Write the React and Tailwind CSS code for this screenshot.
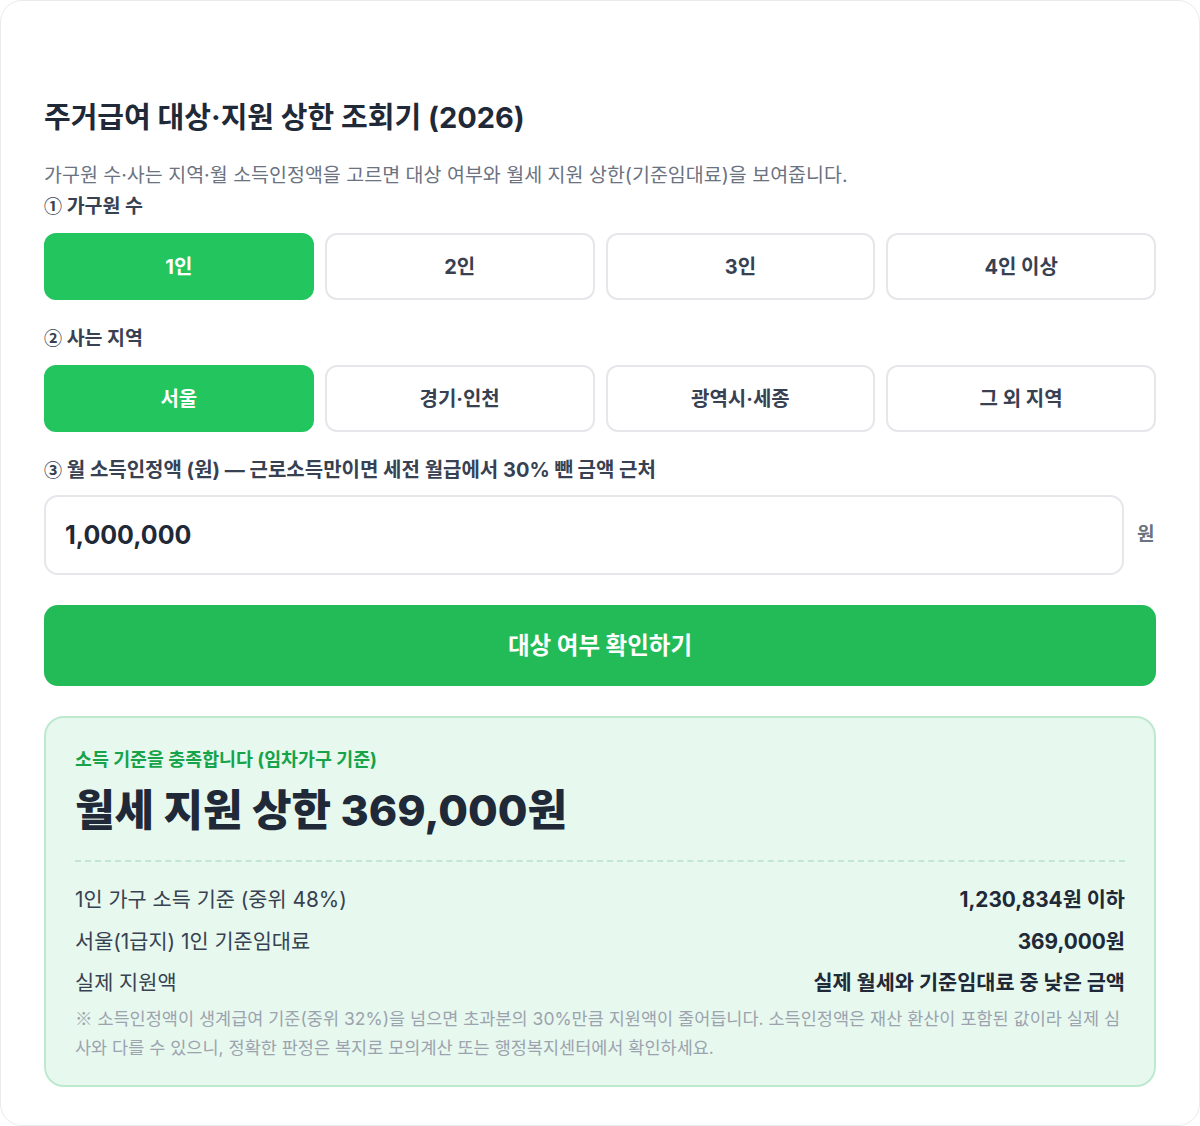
import React, { useState } from 'react'

const FONT = { fontFamily: '"Inter", "Noto Sans CJK KR", "Noto Sans", sans-serif' }
const CJK = { fontFamily: '"Noto Sans CJK KR", sans-serif' }

const HOUSEHOLDS = ['1인', '2인', '3인', '4인 이상']
const REGIONS = ['서울', '경기·인천', '광역시·세종', '그 외 지역']

function OptionGrid({ items, value, onPick }) {
  return (
    <div className="grid grid-cols-4 gap-[11px]">
      {items.map((label, i) => (
        <button
          key={label}
          type="button"
          onClick={() => onPick(i)}
          className={
            i === value
              ? 'h-[67px] rounded-[12px] border-2 border-[#22c55e] bg-[#22c55e] text-[20px] font-bold text-white'
              : 'h-[67px] rounded-[12px] border-2 border-[#e5e7eb] bg-white text-[20px] font-bold text-[#374151]'
          }
        >
          {label}
        </button>
      ))}
    </div>
  )
}

function StepLabel({ num, children, className = '' }) {
  return (
    <div className={`leading-[30px] font-bold text-[#374151] ${className}`}>
      <span style={CJK} className="text-[18px]">{num}</span> {children}
    </div>
  )
}

export default function App() {
  const [household, setHousehold] = useState(0)
  const [region, setRegion] = useState(0)
  const [income, setIncome] = useState('1,000,000')

  return (
    <div style={FONT} className="w-[1200px] h-[1126px] bg-white">
      <div className="h-full rounded-[22px] border border-[#e8eaee] px-[43px] pt-[99px]">
        <h1 className="text-[29px] leading-[36px] font-bold text-[#1f2937]">주거급여 대상·지원 상한 조회기 (2026)</h1>
        <p className="mt-[24px] text-[19.5px] leading-[30px] text-[#6b7280]">
          가구원 수·사는 지역·월 소득인정액을 고르면 대상 여부와 월세 지원 상한(기준임대료)을 보여줍니다.
        </p>

        <StepLabel num="①" className="text-[19.5px]">가구원 수</StepLabel>
        <div className="mt-[12px]">
          <OptionGrid items={HOUSEHOLDS} value={household} onPick={setHousehold} />
        </div>

        <StepLabel num="②" className="mt-[22px] text-[19.5px]">사는 지역</StepLabel>
        <div className="mt-[12px]">
          <OptionGrid items={REGIONS} value={region} onPick={setRegion} />
        </div>

        <StepLabel num="③" className="mt-[22px] text-[20px]">
          월 소득인정액 (원) — 근로소득만이면 세전 월급에서 30% 뺀 금액 근처
        </StepLabel>
        <div className="mt-[10px] flex items-center gap-[13px]">
          <input
            value={income}
            onChange={(e) => setIncome(e.target.value)}
            style={FONT}
            className="h-[80px] flex-1 rounded-[14px] border-2 border-[#e5e7eb] bg-white px-[19px] text-[25px] font-bold text-[#1f2937] outline-none"
          />
          <span className="w-[19px] text-[19px] font-bold text-[#6b7280]">원</span>
        </div>

        <button
          type="button"
          className="mt-[30px] h-[81px] w-full rounded-[14px] bg-[#22bb58] text-[23.5px] font-bold text-white"
        >
          대상 여부 확인하기
        </button>

        <div className="mt-[30px] rounded-[20px] border-2 border-[#bfe9cf] bg-[#e7f8ee] px-[29px] pt-[28px] pb-[23px]">
          <div className="text-[18.4px] leading-[26px] font-bold text-[#16a34a]">소득 기준을 충족합니다 (임차가구 기준)</div>
          <div className="mt-[10px] text-[43px] leading-[56px] font-extrabold text-[#1f2937]">월세 지원 상한 369,000원</div>
          <div className="mt-[22px] border-t-2 border-dashed border-[#c4e6d1]" />
          <div className="mt-[23px] space-y-[11.5px] text-[20.8px] leading-[30px] text-[#374151]">
            <div className="flex justify-between">
              <span>1인 가구 소득 기준 (중위 48%)</span>
              <span className="font-bold text-[#1f2937]">1,230,834원 이하</span>
            </div>
            <div className="flex justify-between">
              <span>서울(1급지) 1인 기준임대료</span>
              <span className="font-bold text-[#1f2937]">369,000원</span>
            </div>
            <div className="flex justify-between">
              <span>실제 지원액</span>
              <span className="font-bold text-[#1f2937]">실제 월세와 기준임대료 중 낮은 금액</span>
            </div>
          </div>
          <p className="mt-[5px] text-[17.5px] leading-[29px] text-[#9ca3af]">
            <span style={CJK} className="leading-[29px]">※</span> 소득인정액이 생계급여 기준(중위 32%)을 넘으면 초과분의 30%만큼 지원액이 줄어듭니다. 소득인정액은 재산 환산이 포함된 값이라 실제 심사와 다를 수 있으니, 정확한 판정은 복지로 모의계산 또는 행정복지센터에서 확인하세요.
          </p>
        </div>
      </div>
    </div>
  )
}
